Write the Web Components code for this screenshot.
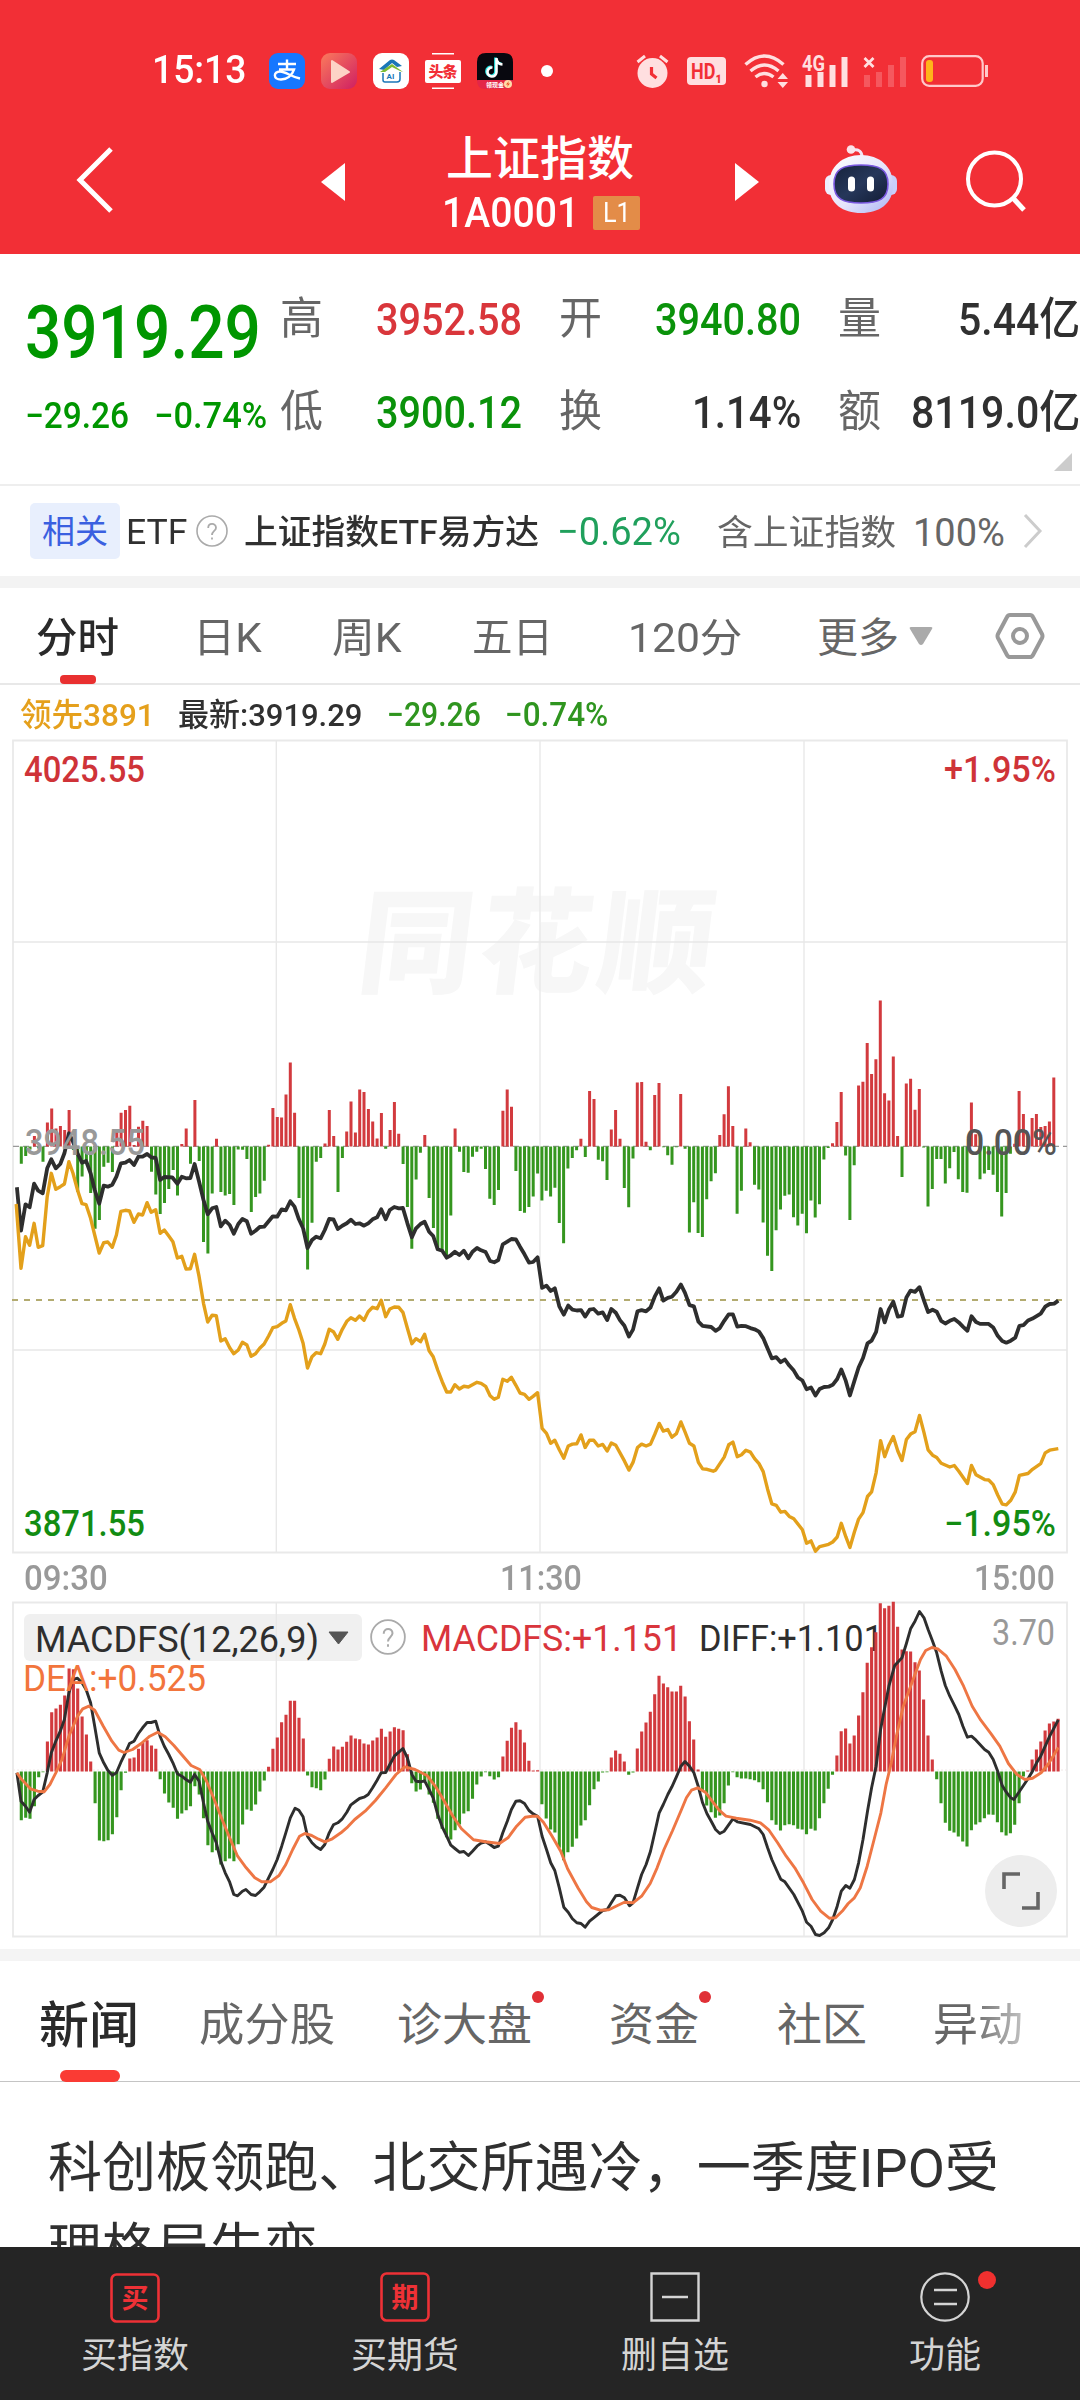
<!DOCTYPE html>
<html lang="zh-CN">
<head>
<meta charset="utf-8">
<title>上证指数</title>
<style>
  * { box-sizing: border-box; }
  body {
    margin: 0;
    width: 1080px;
    height: 2400px;
    overflow: hidden;
    background: #fff;
    color: #303030;
    font-family: Roboto, "Noto Sans CJK SC", sans-serif;
  }
</style>
</head>
<body>
<stock-page></stock-page>

<script>
function register(name, clz) {
  !customElements.get(name) && customElements.define(name, clz);
}

class Component extends HTMLElement {
  static styles = "";
  constructor() {
    super();
    this.attachShadow({ mode: "open" });
  }
  attr(name, fallback = "") {
    return this.getAttribute(name) ?? fallback;
  }
  onMount() {}
  connectedCallback() {
    this.shadowRoot.innerHTML = `
      <style>* { box-sizing: border-box; } svg { display: block; overflow: visible; } ${this.constructor.styles}</style>
      ${this.render()}
    `;
    this.onMount();
  }
  render() {
    return "<slot></slot>";
  }
}

// One line of text squeezed or stretched to a given width
class FitText extends Component {
  static styles = `
    :host { display: block; flex: none; white-space: nowrap; line-height: 1.2; }
    span { display: inline-block; transform-origin: 0 50%; }
  `;
  render() {
    return `<span><slot></slot></span>`;
  }
  onMount() {
    const width = Number(this.attr("w"));
    const span = this.shadowRoot.querySelector("span");
    this.style.width = `${width}px`;
    this.style.fontSize = `${this.attr("size", 36)}px`;
    this.style.marginLeft = `${this.attr("gap", 0)}px`;
    span.style.transform = `scaleX(${width / span.offsetWidth})`;
  }
}
register("fit-text", FitText);

class HelpIcon extends Component {
  static styles = `:host { display: block; flex: none; }`;
  render() {
    const size = this.attr("size", 32);
    return `
      <svg width="${size}" height="${size}" viewBox="0 0 32 32" fill="none" stroke="#aaa" stroke-width="1.6">
        <circle cx="16" cy="16" r="15"/>
        <path d="M12.2 13c0-5.5 7.8-5.3 7.8-.3 0 3.2-4 3.3-4 7.3M16 22.4v2.2" stroke-width="1.8"/>
      </svg>`;
  }
}
register("help-icon", HelpIcon);

class StatusBar extends Component {
  static styles = `
    :host { display: block; height: 107px; padding-top: 35px; color: #fff; }
    .row { display: flex; align-items: center; height: 72px; }
    fit-text { font-weight: 500; }
    svg { flex: none; }
  `;
  render() {
    return `
      <div class="row">
        <fit-text w="94" size="38" gap="152">15:13</fit-text>
        <svg style="margin-left:23px" width="36" height="36" viewBox="0 0 36 36">
          <rect width="36" height="36" rx="9" fill="#1677ff"/>
          <path d="M9 11h18M18 6.500v10M10 16.500h15c-2 6-7 10-13 10-8 0-8-8-1-8 6 0 10 5 20 7" fill="none" stroke="#fff" stroke-width="2.400"/>
        </svg>
        <svg style="margin-left:16px" width="36" height="36" viewBox="0 0 36 36">
          <defs><linearGradient id="p" x2="1" y2="1"><stop stop-color="#fb7a5c"/><stop offset="1" stop-color="#cf1f62"/></linearGradient></defs>
          <rect width="36" height="36" rx="9" fill="url(#p)"/>
          <path d="M11 8v21l17-10z" fill="#fdd3c6" stroke="#fdd3c6" stroke-width="2" stroke-linejoin="round"/>
        </svg>
        <svg style="margin-left:16px" width="36" height="36" viewBox="0 0 36 36">
          <rect width="36" height="36" rx="9" fill="#fff"/>
          <path d="m6 16 11-9q2-1 4 0l8 6-5 1-5-4-8 7z" fill="#1a76b8"/>
          <path d="m7 19 12-8 11 8-3-1-8-4-7 5z" fill="#7cbb34"/>
          <path d="M10 20v7q0 2 2 2h12q3 0 3-3v-7" fill="none" stroke="#1a76b8" stroke-width="1.500"/>
          <text x="13.500" y="26" font-size="8" font-weight="700" fill="#1a76b8" font-family="Roboto">AI</text>
        </svg>
        <svg style="margin-left:16px" width="36" height="36" viewBox="0 0 36 36">
          <path d="M7 .8h22M7 35.200h22" stroke="#fff" stroke-width="1.400"/>
          <rect y="7" width="36" height="23" rx="2" fill="#fff"/>
          <text x="3.500" y="24" font-size="15" font-weight="900" fill="#f22f36" textLength="29" font-family="Noto Sans CJK SC">头条</text>
        </svg>
        <svg style="margin-left:16px" width="36" height="36" viewBox="0 0 36 36">
          <path d="M0 28V9q0-9 9-9h18q9 0 9 9v19z" fill="#08080f"/>
          <path d="M0 27h36q0 9-8 9H8q-8 0-8-9" fill="#e32748"/>
          <path d="M19.500 5v14a4.500 4.500 0 1 1-4-4.500M19.500 6q1 5 6 5.500" fill="none" stroke="#25e8e6" stroke-width="2.800" transform="translate(-1 -.6)"/>
          <path d="M19.500 5v14a4.500 4.500 0 1 1-4-4.500M19.500 6q1 5 6 5.500" fill="none" stroke="#fff" stroke-width="2.600"/>
          <text x="9" y="34" font-size="6" font-weight="700" fill="#fff" textLength="18" font-family="Noto Sans CJK SC">领现金</text>
          <circle cx="31" cy="31" r="4" fill="#ffdba8"/>
          <path d="m32 28-3 3.500h2L30 34l3-3.500h-2z" fill="#e84b20"/>
        </svg>
        <svg style="margin-left:28px" width="12" height="12"><circle cx="6" cy="6" r="6" fill="#fff"/></svg>
        <svg style="margin-left:83px" width="33" height="36" viewBox="0 0 33 36">
          <circle cx="16.500" cy="20" r="15" fill="#ffdfe0"/>
          <path d="m1.500 9 7.500-6M31.500 9 24 3" stroke="#ffdfe0" stroke-width="3"/>
          <path d="M15.500 14v7l5 4" fill="none" stroke="#f22f36" stroke-width="3.200"/>
        </svg>
        <svg style="margin-left:18px" width="39" height="28" viewBox="0 0 39 28">
          <rect width="39" height="28" rx="4" fill="#ffdfe0"/>
          <text x="4" y="22" font-size="22" font-weight="700" fill="#f22f36" font-family="Roboto" textLength="31" lengthAdjust="spacingAndGlyphs">HD₁</text>
        </svg>
        <svg style="margin-left:18px" width="45" height="36" viewBox="0 0 45 36" fill="none" stroke="#ffdfe0" stroke-width="3.400">
          <path d="M1.500 11.500q19-17 38 0M6.500 18q14-12 28 0M11.500 24q9-7 18 0"/>
          <circle cx="20.500" cy="31" r="3.200" fill="#ffdfe0" stroke="none"/>
          <path d="m33.500 26 5.300-6 5.200 6zM33.500 29l5.300 6 5.200-6z" fill="#ffdfe0" stroke="none"/>
        </svg>
        <svg style="margin-left:13px" width="46" height="36" viewBox="0 0 46 36">
          <text x="0" y="18" font-size="22" font-weight="700" fill="#ffdfe0" textLength="23" lengthAdjust="spacingAndGlyphs" font-family="Roboto">4G</text>
          <path d="M6.500 22v12M18.500 19v15M30.500 12v22M42.500 4v30" stroke="#ffdfe0" stroke-width="6"/>
        </svg>
        <svg style="margin-left:15px" width="44" height="36" viewBox="0 0 44 36">
          <path d="M4 22v12M16 19v15M28 12v22M40 4v30" stroke="#f5585e" stroke-width="6"/>
          <path d="m1.500 5 9 9m0-9-9 9" stroke="#ffdfe0" stroke-width="2.800"/>
        </svg>
        <svg style="margin-left:14px" width="68" height="32" viewBox="0 0 68 32">
          <rect x="1.200" y="1.200" width="60.500" height="29.600" rx="7" fill="none" stroke="#ffc9ca" stroke-width="2.200"/>
          <rect x="5" y="5" width="7" height="22" rx="3" fill="#ffb41a"/>
          <path d="M65.500 10v12" stroke="#ffc9ca" stroke-width="3"/>
        </svg>
      </div>`;
  }
}
register("status-bar", StatusBar);

class NavBar extends Component {
  static styles = `
    :host { display: flex; align-items: center; height: 147px; color: #fff; }
    .title { display: flex; flex-direction: column; margin: 8px 0 0 101px; width: 196px; }
    .code { display: flex; align-items: center; height: 50px; margin-top: 1px; }
    .badge { margin-left: 14px; width: 47px; height: 34px; border-radius: 2px; background: #e38c48; padding: 1px 0 0 10px; }
    fit-text { font-weight: 500; }
    .badge fit-text { font-weight: 400; }
    svg { flex: none; }
  `;
  render() {
    return `
      <svg style="margin:-2px 0 0 77px" width="37" height="66" fill="none" stroke="#fff" stroke-width="5"><path d="M34 2 3 33l31 31"/></svg>
      <svg style="margin-left:207px;margin-top:2px" width="24" height="38" fill="#fff"><path d="M24 0v38L0 19z"/></svg>
      <div class="title">
        <fit-text w="188" size="47">上证指数</fit-text>
        <div class="code">
          <fit-text w="137" size="42" gap="-4">1A0001</fit-text>
          <div class="badge"><fit-text w="28" size="27">L1</fit-text></div>
        </div>
      </div>
      <svg style="margin-left:93px;margin-top:2px" width="24" height="38" fill="#fff"><path d="M0 0v38l24-19z"/></svg>
      <svg style="margin:-4px 0 0 66px" width="72" height="68" viewBox="0 0 72 68">
        <defs>
          <linearGradient id="h" x2="1" y2="1"><stop stop-color="#fff"/><stop offset=".55" stop-color="#e6e4fb"/><stop offset="1" stop-color="#a9b4f4"/></linearGradient>
          <linearGradient id="f" x2="1" y2="1"><stop stop-color="#16233c"/><stop offset=".5" stop-color="#26375a"/><stop offset="1" stop-color="#121c34"/></linearGradient>
        </defs>
        <path d="M37 12c0-6-4-8-9-7" fill="none" stroke="#f3e4f5" stroke-width="3"/>
        <circle cx="26" cy="4.500" r="4.300" fill="#fbe3ea"/>
        <rect y="30" width="14" height="20" rx="6" fill="#eeeefe"/>
        <rect x="58" y="30" width="14" height="20" rx="6" fill="#c9cffa"/>
        <path d="M36 10C54 10 68 21 68 40S54 68 36 68 4 59 4 40 18 10 36 10" fill="url(#h)"/>
        <path d="M36 20c18 0 27 4 27 19s-9 19-27 19S9 54 9 39s9-19 27-19" fill="url(#f)" stroke="#7a58e0" stroke-width="1.600"/>
        <rect x="23" y="31.500" width="7" height="15" rx="3.500" fill="#fff"/>
        <rect x="42" y="31.500" width="7" height="15" rx="3.500" fill="#fff"/>
      </svg>
      <svg style="margin-left:69px" width="60" height="62" viewBox="0 0 60 62" fill="none" stroke="#fff">
        <circle cx="28.500" cy="29" r="26.500" stroke-width="4"/><path d="m47 48 11 12" stroke-width="5"/>
      </svg>`;
  }
}
register("nav-bar", NavBar);

class QuotePanel extends Component {
  static styles = `
    :host { display: flex; position: relative; height: 232px; border-bottom: 2px solid #eee; font-weight: 500; }
    .last { width: 281px; color: #009600; padding-top: 35px; }
    .change { display: flex; margin-top: 17px; }
    .stats { display: grid; grid-template-columns: 279px 279px 242px; grid-auto-rows: 93px; padding-top: 19px; width: 799px; }
    .cell { display: flex; align-items: center; justify-content: space-between; padding-right: 38px; }
    .cell:nth-child(3n) { padding-right: 1px; }
    .label { color: #666; font-weight: 400; }
    .up { color: #d9363b; }
    .down { color: #0a920a; }
    .more { position: absolute; right: 8px; bottom: 13px; }
  `;
  cell([label, value, width, tone]) {
    return `
      <div class="cell">
        <fit-text class="label" w="43" size="44" gap="-1">${label}</fit-text>
        <fit-text class="${tone}" w="${width}" size="45">${value}</fit-text>
      </div>`;
  }
  render() {
    const stats = [
      ["高", "3952.58", 146, "up"], ["开", "3940.80", 146, "down"], ["量", "5.44亿", 122, ""],
      ["低", "3900.12", 146, "down"], ["换", "1.14%", 109, ""], ["额", "8119.0亿", 169, ""],
    ];
    return `
      <div class="last">
        <fit-text w="236" size="74" gap="25">3919.29</fit-text>
        <div class="change">
          <fit-text w="104" size="36" gap="25">−29.26</fit-text>
          <fit-text w="113" size="36" gap="25">−0.74%</fit-text>
        </div>
      </div>
      <div class="stats">${stats.map(this.cell).join("")}</div>
      <svg class="more" width="18" height="18" fill="#ccc"><path d="M18 0v18H0z"/></svg>`;
  }
}
register("quote-panel", QuotePanel);

class EtfRow extends Component {
  static styles = `
    :host { display: flex; align-items: center; height: 102px; border-bottom: 12px solid #f3f3f3; }
    .tag { display: flex; align-items: center; margin-left: 30px; width: 90px; height: 56px; border-radius: 5px; background: #e8effd; color: #3a60e0; padding-top: 2px; }
    .name { font-weight: 500; padding-top: 3px; }
    .latin { padding-top: 3px; }
    .rate { color: #20a05c; padding-top: 3px; }
    .gray { color: #666; padding-top: 5px; }
  `;
  render() {
    return `
      <div class="tag"><fit-text w="66" size="33" gap="12">相关</fit-text></div>
      <fit-text class="latin" w="61" size="35" gap="6">ETF</fit-text>
      <help-icon size="32" style="margin-left:9px"></help-icon>
      <fit-text class="name" w="295" size="34" gap="16">上证指数ETF易方达</fit-text>
      <fit-text class="rate" w="124" size="39" gap="18">−0.62%</fit-text>
      <fit-text class="gray" w="179" size="35" gap="36">含上证指数</fit-text>
      <fit-text class="gray" w="92" size="38" gap="17">100%</fit-text>
      <svg style="margin-left:18px" width="20" height="34" fill="none" stroke="#ccc" stroke-width="3"><path d="m2 1 15 16L2 33"/></svg>`;
  }
}
register("etf-row", EtfRow);

class PeriodTabs extends Component {
  static styles = `
    :host { display: flex; align-items: center; height: 97px; border-bottom: 2px solid #e8e8e8; color: #666; padding-top: 6px; }
    .active { position: relative; color: #2a2a2a; font-weight: 500; }
    .active::after { content: ""; position: absolute; left: 24px; bottom: -21px; width: 36px; height: 9px; border-radius: 4px; background: #e93030; }
  `;
  render() {
    return `
      <fit-text class="active" w="83" size="41" gap="36">分时</fit-text>
      <fit-text w="69" size="41" gap="74">日K</fit-text>
      <fit-text w="70" size="41" gap="70">周K</fit-text>
      <fit-text w="81" size="41" gap="70">五日</fit-text>
      <fit-text w="114" size="40" gap="75">120分</fit-text>
      <fit-text w="82" size="41" gap="75">更多</fit-text>
      <svg style="margin:-4px 0 0 10px" width="24" height="19" fill="#aaa"><path d="M2 0h20q2 0 1 2l-9 15q-2 2-4 0L1 2q-1-2 1-2"/></svg>
      <svg style="margin:-6px 0 0 62px" width="50" height="46" fill="none" stroke="#999" stroke-width="4">
        <path d="M15 2h20q2 0 3 2l9 17q1 2 0 4l-9 17q-1 2-3 2H15q-2 0-3-2L3 25q-1-2 0-4l9-17q1-2 3-2z"/><circle cx="25" cy="23" r="7"/>
      </svg>`;
  }
}
register("period-tabs", PeriodTabs);

class PriceLegend extends Component {
  static styles = `
    :host { display: flex; align-items: center; height: 54px; padding-top: 6px; }
    .lead { color: #e5a01c; }
    .down { color: #2f951f; }
    fit-text { font-weight: 500; }
  `;
  render() {
    return `
      <fit-text class="lead" w="135" size="32" gap="20">领先3891</fit-text>
      <fit-text w="184" size="32" gap="23">最新:3919.29</fit-text>
      <fit-text class="down" w="94" size="33" gap="25">−29.26</fit-text>
      <fit-text class="down" w="103" size="33" gap="24">−0.74%</fit-text>`;
  }
}
register("price-legend", PriceLegend);

// Each session carries its own raw scale: y grows downwards, x is in steps of `kx` per pixel
const morning = {
  x: 0, kx: 2.9037, first: 1,
  ky: 3, zero: 559,
  bars: [
    611,588,568,528,565,605,487,445,505,498,510,450,570,695,649,600,699,806,780,620,
    608,636,515,458,450,437,555,500,482,498,635,703,762,729,687,630,706,552,505,611,
    420,603,846,880,700,536,696,706,702,735,568,569,597,756,711,700,662,554,444,471,
    472,403,307,458,714,800,928,788,605,594,550,450,528,696,594,514,424,517,388,396,
    447,484,535,459,566,510,426,521,612,741,866,658,578,525,714,804,870,870,885,766,
    505,575,636,638,590,575,566,627,716,735,690,452,388,440,633,753,758,741,709,640,
  ],
  price: "49,682 61,812 74,733 86,742 99,671 111,692 124,700 137,625 149,598 162,625 175,612 187,580 200,520 212,545 225,580 238,608 250,603 263,640 275,690 288,731 301,677 313,680 326,674 338,650 351,610 364,608 376,600 389,615 402,590 414,590 427,582 439,592 452,594 465,660 477,651 500,652 515,671 528,650 540,655 553,654 565,612 578,665 591,720 603,763 616,745 628,741 641,799 654,782 667,795 679,821 692,792 704,777 717,784 729,821 742,812 754,801 767,800 792,769 805,770 818,748 830,751 843,724 855,740 868,778 880,805 893,864 906,840 918,830 931,835 943,810 956,777 968,778 981,807 994,797 1007,790 1019,779 1032,792 1044,790 1057,797 1069,790 1082,778 1095,772 1107,748 1120,778 1132,750 1145,741 1158,745 1170,744 1183,790 1196,832 1208,805 1221,792 1233,785 1246,815 1258,828 1271,868 1284,872 1297,893 1309,886 1321,875 1334,885 1347,872 1360,895 1372,875 1385,864 1397,871 1410,876 1423,903 1435,907 1447,900 1460,853 1473,845 1485,837 1498,838 1510,860 1523,883 1536,908 1548,906 1561,892",
  lead: "47,732 61,925 74,830 86,856 99,790 111,862 124,857 137,710 149,640 162,688 175,680 187,672 200,605 212,640 225,690 238,731 250,734 263,775 275,825 288,879 301,848 313,846 326,862 338,825 351,754 364,751 376,753 389,787 402,762 414,765 427,728 439,757 452,749 465,820 477,810 490,828 502,845 515,894 528,889 540,927 553,926 565,883 578,950 591,1030 603,1086 616,1066 628,1067 641,1143 654,1136 667,1163 679,1181 692,1170 704,1147 717,1155 729,1189 742,1181 754,1165 767,1152 780,1128 792,1103 805,1100 818,1090 830,1083 843,1034 855,1075 868,1110 880,1150 893,1224 906,1190 918,1178 931,1181 943,1152 956,1108 968,1115 981,1138 994,1108 1007,1084 1019,1073 1032,1081 1044,1068 1057,1081 1069,1055 1082,1042 1095,1046 1107,1021 1120,1070 1132,1047 1145,1041 1158,1042 1170,1057 1183,1105 1196,1151 1208,1136 1221,1145 1233,1123 1246,1172 1258,1190 1271,1230 1284,1265 1297,1296 1309,1296 1321,1274 1334,1287 1347,1279 1360,1281 1385,1267 1397,1270 1410,1279 1423,1307 1435,1318 1447,1312 1460,1258 1473,1264 1485,1252 1498,1276 1510,1299 1523,1303 1536,1318 1548,1309 1561,1298",
  macd: [
    842,835,838,800,713,698,606,518,507,496,468,387,389,447,531,585,666,791,903,905,
    902,884,833,752,700,657,654,628,610,602,618,628,719,762,789,805,838,822,812,800,
    740,765,836,917,938,932,975,965,957,965,914,855,810,814,795,756,723,682,628,594,
    548,526,484,484,535,597,708,743,746,752,720,658,621,630,622,607,588,597,599,612,
    615,603,594,568,592,576,563,568,572,644,731,756,750,726,765,790,838,868,893,900,
    872,855,822,815,778,735,711,698,710,720,713,651,604,565,548,571,609,664,693,692,
  ],
  diff: "49,700 61,785 74,800 86,818 99,780 111,768 124,758 137,700 149,640 162,605 175,575 187,540 200,460 212,420 225,416 238,430 250,450 263,490 275,560 288,640 301,670 313,692 326,707 338,700 351,668 364,640 376,612 389,605 402,582 414,565 427,549 439,549 452,545 465,590 477,620 490,645 502,670 515,703 528,710 540,720 553,728 565,705 578,725 591,790 603,845 616,880 628,910 641,965 654,1000 667,1028 679,1065 690,1069 704,1055 714,1050 729,1065 742,1068 754,1057 767,1043 780,1015 792,990 805,960 818,920 830,880 843,835 857,806 868,812 880,832 893,890 906,910 918,922 931,930 943,915 956,880 968,856 981,850 994,838 1007,818 1019,796 1032,786 1044,777 1057,773 1069,765 1082,745 1095,722 1107,700 1120,699 1132,675 1145,650 1158,638 1170,627 1183,655 1196,705 1208,725 1221,727 1233,724 1246,750 1258,775 1271,825 1284,862 1297,890 1309,917 1321,927 1334,938 1347,936 1360,948 1372,935 1385,920 1397,911 1410,907 1423,915 1435,924 1447,920 1460,880 1473,845 1485,810 1498,785 1510,784 1523,792 1536,813 1548,823 1561,830",
  dea: "49,700 61,718 74,732 90,749 110,755 128,757 145,735 162,700 180,660 200,590 225,530 240,508 258,500 275,512 300,560 325,605 345,632 360,639 385,630 410,612 435,590 458,578 480,592 505,618 530,648 555,678 580,690 600,725 620,775 645,840 665,890 690,950 715,985 740,1015 760,1027 785,1027 810,1008 830,975 850,930 870,890 885,882 905,888 925,899 943,907 965,898 990,880 1010,862 1030,840 1060,815 1090,783 1120,745 1150,705 1175,682 1205,690 1240,708 1265,742 1290,785 1315,830 1340,868 1375,901 1410,907 1450,912 1475,895 1500,860 1525,833 1545,830 1561,830",
};

const afternoon = {
  x: 540, kx: 2.9037, first: 121,
  ky: 2.6133, zero: 487,
  bars: [
    628,603,618,595,687,740,545,517,497,467,515,342,363,522,526,575,443,392,467,596,
    646,519,320,319,475,497,353,321,489,510,535,489,350,493,712,633,713,724,625,578,
    557,457,403,330,434,663,603,440,476,587,600,686,773,813,706,652,616,613,672,694,
    663,714,628,673,638,521,491,479,423,345,511,679,536,328,318,217,298,259,106,348,
    367,252,460,567,323,310,391,337,490,644,598,520,520,584,544,502,573,606,608,372,
    455,573,558,549,561,606,670,609,506,480,342,402,460,413,402,436,434,422,307,487,
  ],
  price: "-7,777 6,857 19,851 31,865 43,858 56,905 69,927 82,903 94,914 107,916 119,915 131,932 144,914 156,912 169,924 182,921 195,941 207,912 220,922 232,941 245,956 258,984 270,966 283,918 295,915 308,918 321,908 333,880 346,858 358,890 371,883 383,880 396,867 409,848 421,870 434,902 447,905 460,945 472,956 497,959 510,969 522,962 535,943 548,926 560,926 573,958 585,956 598,957 611,962 623,965 636,971 648,988 661,1015 673,1041 686,1038 699,1051 711,1044 724,1060 737,1073 749,1091 762,1099 774,1122 787,1117 800,1138 812,1121 825,1116 838,1115 850,1110 863,1095 875,1070 888,1100 900,1138 913,1100 925,1065 938,1040 951,1002 963,995 976,972 989,912 1001,947 1013,913 1026,893 1039,932 1051,930 1064,882 1076,864 1089,867 1102,855 1115,890 1127,920 1140,914 1152,919 1165,943 1177,950 1190,943 1203,938 1216,947 1228,958 1241,969 1253,931 1266,946 1278,951 1303,951 1316,960 1329,982 1342,996 1354,1000 1367,995 1380,987 1392,956 1404,954 1417,942 1430,937 1454,924 1467,906 1480,899 1493,898 1505,890",
  lead: "-7,1131 6,1224 19,1237 31,1263 43,1255 56,1280 69,1302 82,1270 94,1265 107,1264 119,1241 131,1274 144,1255 156,1255 169,1270 182,1266 195,1283 207,1262 220,1268 245,1309 258,1333 270,1313 283,1274 295,1265 308,1270 321,1265 333,1240 346,1211 358,1231 371,1227 383,1247 396,1238 409,1207 421,1233 434,1263 447,1270 460,1313 472,1330 485,1331 503,1336 510,1333 535,1299 548,1267 560,1260 573,1298 585,1293 598,1281 611,1286 623,1303 636,1316 648,1337 661,1383 673,1421 686,1425 699,1443 711,1441 724,1454 737,1460 762,1489 774,1524 787,1518 800,1545 812,1533 838,1527 850,1521 863,1508 875,1472 888,1507 900,1535 913,1495 925,1461 938,1444 951,1402 963,1390 976,1340 989,1256 1001,1298 1013,1268 1026,1245 1039,1283 1051,1308 1064,1253 1076,1239 1089,1233 1102,1190 1115,1235 1127,1280 1140,1294 1152,1300 1165,1315 1190,1325 1203,1321 1216,1336 1241,1368 1253,1321 1266,1345 1291,1358 1303,1359 1316,1371 1329,1398 1342,1422 1354,1424 1367,1412 1380,1390 1392,1347 1417,1342 1430,1331 1454,1316 1467,1288 1480,1281 1505,1277",
  macd: [
    794,837,870,879,925,962,938,922,897,858,842,797,749,726,699,698,654,633,643,666,
    706,699,627,576,549,517,464,409,432,443,456,456,439,471,545,600,690,755,798,818,
    835,828,791,738,698,713,717,717,719,722,728,749,788,842,856,873,857,854,857,868,
    870,884,868,873,836,791,748,706,648,575,567,612,588,528,458,370,323,278,191,206,
    199,187,262,330,335,336,368,393,480,588,660,719,791,850,874,879,891,906,921,872,
    855,848,836,825,826,848,878,888,881,856,791,711,693,660,630,606,573,552,546,538,
  ],
  diff: "-7,830 6,890 19,930 31,970 43,993 56,1045 69,1103 82,1118 94,1138 107,1150 119,1152 131,1163 144,1145 156,1135 182,1113 195,1110 207,1090 220,1069 232,1067 245,1075 260,1099 270,1090 283,1045 295,1005 308,975 321,935 333,880 346,820 358,795 371,765 383,742 396,712 409,680 421,666 434,680 447,700 460,742 472,790 485,823 497,845 510,870 522,882 535,875 560,838 573,847 611,855 636,868 648,885 661,925 673,960 686,990 699,1019 711,1027 737,1065 762,1115 774,1148 787,1160 800,1185 812,1188 825,1180 838,1165 850,1140 863,1100 875,1055 888,1038 900,1046 913,1020 925,970 938,900 951,815 963,745 976,680 989,570 1001,505 1013,440 1030,378 1051,355 1064,312 1076,268 1089,245 1102,216 1115,235 1127,270 1140,305 1152,340 1165,395 1177,438 1190,470 1203,497 1216,525 1228,560 1241,593 1253,590 1266,602 1291,630 1303,638 1316,660 1329,695 1342,738 1354,758 1367,775 1376,780 1392,756 1417,718 1430,695 1442,670 1454,650 1467,620 1480,590 1505,541",
  dea: "-7,830 10,848 35,890 60,935 80,988 110,1045 135,1087 150,1104 175,1112 200,1111 225,1098 245,1088 270,1090 295,1070 320,1032 340,985 360,930 385,873 410,812 425,775 440,752 458,745 480,758 500,785 520,812 540,830 570,836 610,842 640,850 665,872 690,910 715,950 740,985 765,1030 790,1080 815,1115 840,1136 858,1135 880,1112 895,1092 912,1076 930,1045 950,980 970,900 990,820 1005,735 1020,670 1035,590 1055,500 1080,430 1105,360 1120,333 1138,324 1155,328 1180,350 1205,390 1230,440 1255,500 1280,542 1310,583 1335,620 1360,672 1385,705 1408,720 1430,716 1455,700 1475,675 1490,650 1505,624",
};

const sessions = [morning, afternoon];
const RED = "#d23a3e";
const GREEN = "#35961f";

function drawLine(key, kyOf, top, color, width) {
  const pts = sessions.flatMap((s) =>
    s[key].split(" ").map((p) => {
      const [x, y] = p.split(",").map(Number);
      return `${(s.x + x / s.kx).toFixed(1)},${(top + y / kyOf(s)).toFixed(1)}`;
    })
  );
  return `<polyline points="${pts.join(" ")}" fill="none" stroke="${color}" stroke-width="${width}" stroke-linejoin="round"/>`;
}

function drawBars(key, zeroOf, kyOf, base, width) {
  const paths = { up: "", down: "" };
  sessions.forEach((s) =>
    s[key].forEach((v, i) => {
      const h = (v - zeroOf(s)) / kyOf(s);
      const x = 17 + 4.338 * (s.first + i);
      paths[h < 0 ? "up" : "down"] += `M${x.toFixed(1)} ${base}v${h.toFixed(1)}`;
    })
  );
  return `
    <path d="${paths.up}" stroke="${RED}" stroke-width="${width}"/>
    <path d="${paths.down}" stroke="${GREEN}" stroke-width="${width}"/>`;
}

function label(x, y, width, text, fill, size = 36) {
  return `<text x="${x}" y="${y}" font-size="${size}" fill="${fill}" textLength="${width}" lengthAdjust="spacingAndGlyphs">${text}</text>`;
}

class PriceChart extends Component {
  static styles = `
    :host { display: block; height: 814px; }
    svg { font-family: Roboto, sans-serif; font-weight: 500; }
    .mark { font-family: "Noto Sans CJK SC", sans-serif; font-weight: 900; }
  `;
  render() {
    const top = 221;
    return `
      <svg width="1080" height="814" viewBox="0 0 1080 814">
        <text class="mark" transform="translate(355 245) skewX(-7)" font-size="114" fill="#f7f7f7" textLength="354">同花顺</text>
        <path d="M13 1.500h1054v812H13z" fill="none" stroke="#e9e9e9" stroke-width="1.800"/>
        <path d="M276.300 1v812M540 1v812M804 1v812M13 203h1054M13 611h1054" fill="none" stroke="#e8e8e8" stroke-width="1.400"/>
        <path d="M13 407.400h1054" stroke="#999" stroke-width="1.200" stroke-dasharray="6 4"/>
        ${drawBars("bars", (s) => s.zero, (s) => s.ky, 407.4, 3)}
        <path d="M12 561h1052" stroke="#b3ab70" stroke-width="1.800" stroke-dasharray="6 6"/>
        ${drawLine("price", (s) => s.ky, top, "#2e2e2e", 3.8)}
        ${drawLine("lead", (s) => s.ky, top, "#e3a01b", 3.4)}
        ${label(24, 43, 121, "4025.55", "#cf3338")}
        ${label(944, 43, 112, "+1.95%", "#cf3338")}
        ${label(25, 416, 120, "3948.55", "#999")}
        ${label(965, 416, 92, "0.00%", "#555")}
        ${label(24, 797, 121, "3871.55", "#128c12")}
        ${label(944, 797, 112, "−1.95%", "#128c12")}
      </svg>`;
  }
}
register("price-chart", PriceChart);

class TimeAxis extends Component {
  static styles = `
    :host { display: flex; align-items: center; justify-content: space-between; height: 49px; padding: 3px 25px 0 24px; color: #999; font-weight: 500; }
  `;
  render() {
    return `
      <fit-text w="84" size="35">09:30</fit-text>
      <fit-text w="82" size="35">11:30</fit-text>
      <fit-text w="81" size="35">15:00</fit-text>`;
  }
}
register("time-axis", TimeAxis);

class MacdChart extends Component {
  static styles = `
    :host { display: block; position: relative; height: 347px; }
    .plot { font-family: Roboto, sans-serif; }
    .expand { position: absolute; left: 985px; top: 252px; }
    help-icon { position: absolute; left: 370px; top: 17px; }
  `;
  render() {
    const top = -62.5;
    return `
      <svg class="plot" width="1080" height="347" viewBox="0 0 1080 347">
        <rect x="24" y="12" width="338" height="47" rx="6" fill="#f0f0f0"/>
        <path d="M13 .5h1054v334H13z" fill="none" stroke="#e9e9e9" stroke-width="1.800"/>
        <path d="M276.300 0v335M540 0v335M804 0v335" fill="none" stroke="#e8e8e8" stroke-width="1.400"/>
        <path d="M13 168h1054" stroke="#f0e8e8" stroke-dasharray="2 2"/>
        ${label(35, 50, 284, "MACDFS(12,26,9)", "#2e2e2e", 37)}
        <path d="M329 30h19l-9.500 12z" fill="#555" stroke="#555" stroke-linejoin="round"/>
        ${label(421, 49, 261, "MACDFS:+1.151", "#d9353c", 37)}
        ${label(699, 49, 184, "DIFF:+1.101", "#2e2e2e", 37)}
        ${label(992, 43, 63, "3.70", "#999", 36)}
        ${drawBars("macd", () => 696, () => 3, 169.5, 3.1)}
        ${drawLine("diff", () => 3, top, "#2e2e2e", 2.9)}
        ${drawLine("dea", () => 3, top, "#ee7644", 2.9)}
        ${label(23, 89, 183, "DEA:+0.525", "#f2753c", 37)}
      </svg>
      <help-icon size="36"></help-icon>
      <svg class="expand" width="72" height="74" viewBox="0 0 72 74">
        <circle cx="36" cy="37" r="36" fill="#ededed"/>
        <path d="M19 35V20h16M53 38v16H37" fill="none" stroke="#666" stroke-width="3.600"/>
      </svg>`;
  }
}
register("macd-chart", MacdChart);

class NewsTabs extends Component {
  static styles = `
    :host { display: flex; align-items: center; height: 133px; border-top: 12px solid #f4f4f4; border-bottom: 1px solid #c4c4c4; color: #666; padding-top: 9px; }
    fit-text { position: relative; }
    .active { color: #2a2a2a; font-weight: 500; }
    .active::after { content: ""; position: absolute; left: 21px; bottom: -26px; width: 60px; height: 12px; border-radius: 6px; background: #fa3b34; }
    .dot::after { content: ""; position: absolute; right: -12px; top: -8px; width: 12px; height: 12px; border-radius: 50%; background: #e03036; }
    .fade { -webkit-mask-image: linear-gradient(90deg, #000 40%, rgba(0, 0, 0, .4)); mask-image: linear-gradient(90deg, #000 40%, rgba(0, 0, 0, .4)); }
  `;
  render() {
    return `
      <fit-text class="active" w="100" size="50" gap="39">新闻</fit-text>
      <fit-text w="136" size="45" gap="60">成分股</fit-text>
      <fit-text class="dot" w="135" size="45" gap="62">诊大盘</fit-text>
      <fit-text class="dot" w="90" size="45" gap="77">资金</fit-text>
      <fit-text w="90" size="45" gap="78">社区</fit-text>
      <fit-text class="fade" w="90" size="45" gap="66">异动</fit-text>`;
  }
}
register("news-tabs", NewsTabs);

class NewsItem extends Component {
  static styles = `
    :host { display: block; height: 165px; overflow: hidden; padding: 46px 0 0 48px; color: #303030; }
    fit-text { line-height: 81px; height: 81px; }
  `;
  render() {
    return `
      <fit-text w="951" size="54">科创板领跑、北交所遇冷，一季度IPO受</fit-text>
      <fit-text w="270" size="54">理格局生变</fit-text>`;
  }
}
register("news-item", NewsItem);

class ActionItem extends Component {
  static styles = `
    :host { position: relative; display: flex; flex-direction: column; align-items: center; flex: 1; padding-top: 25px; color: #d4d4d4; }
    svg { margin-bottom: 13px; }
    .dot { position: absolute; left: 168px; top: 24px; width: 18px; height: 18px; border-radius: 50%; background: #f0302f; }
  `;
  render() {
    const glyph = (char, dy = 0) => `
      <g transform="translate(0 ${dy})">
        <rect x="1.500" y="1.500" width="47" height="47" rx="5" fill="none" stroke="#ee3136" stroke-width="2.600"/>
        <text x="25" y="35" text-anchor="middle" font-size="27" font-weight="700" fill="#ee3136" font-family="Noto Sans CJK SC">${char}</text>
      </g>`;
    const icons = {
      buy: glyph("买", 1),
      future: glyph("期"),
      remove: `<path d="M1.500 1.500h47v47h-47zM12 25h26" fill="none" stroke="#d4d4d4" stroke-width="2.400"/>`,
      menu: `<circle cx="25" cy="25" r="23.700" fill="none" stroke="#d4d4d4" stroke-width="2.200"/><path d="M14 18h23M14 32h23" stroke="#d4d4d4" stroke-width="2.600"/>`,
    };
    return `
      <svg width="50" height="50" viewBox="0 0 50 50">${icons[this.attr("icon")]}</svg>
      <fit-text w="${this.attr("w")}" size="36"><slot></slot></fit-text>
      ${this.hasAttribute("dot") ? `<div class="dot"></div>` : ""}`;
  }
}
register("action-item", ActionItem);

class ActionBar extends Component {
  static styles = `:host { display: flex; height: 153px; background: #252525; }`;
  render() {
    return `
      <action-item icon="buy" w="108">买指数</action-item>
      <action-item icon="future" w="108">买期货</action-item>
      <action-item icon="remove" w="108">删自选</action-item>
      <action-item icon="menu" w="72" dot>功能</action-item>`;
  }
}
register("action-bar", ActionBar);

class StockPage extends Component {
  static styles = `
    :host { display: flex; flex-direction: column; width: 1080px; height: 2400px; background: #fff; }
    header { background: #f22f36; }
  `;
  render() {
    return `
      <header>
        <status-bar></status-bar>
        <nav-bar></nav-bar>
      </header>
      <quote-panel></quote-panel>
      <etf-row></etf-row>
      <period-tabs></period-tabs>
      <price-legend></price-legend>
      <price-chart></price-chart>
      <time-axis></time-axis>
      <macd-chart></macd-chart>
      <news-tabs></news-tabs>
      <news-item></news-item>
      <action-bar></action-bar>`;
  }
}
register("stock-page", StockPage);
</script>
</body>
</html>
